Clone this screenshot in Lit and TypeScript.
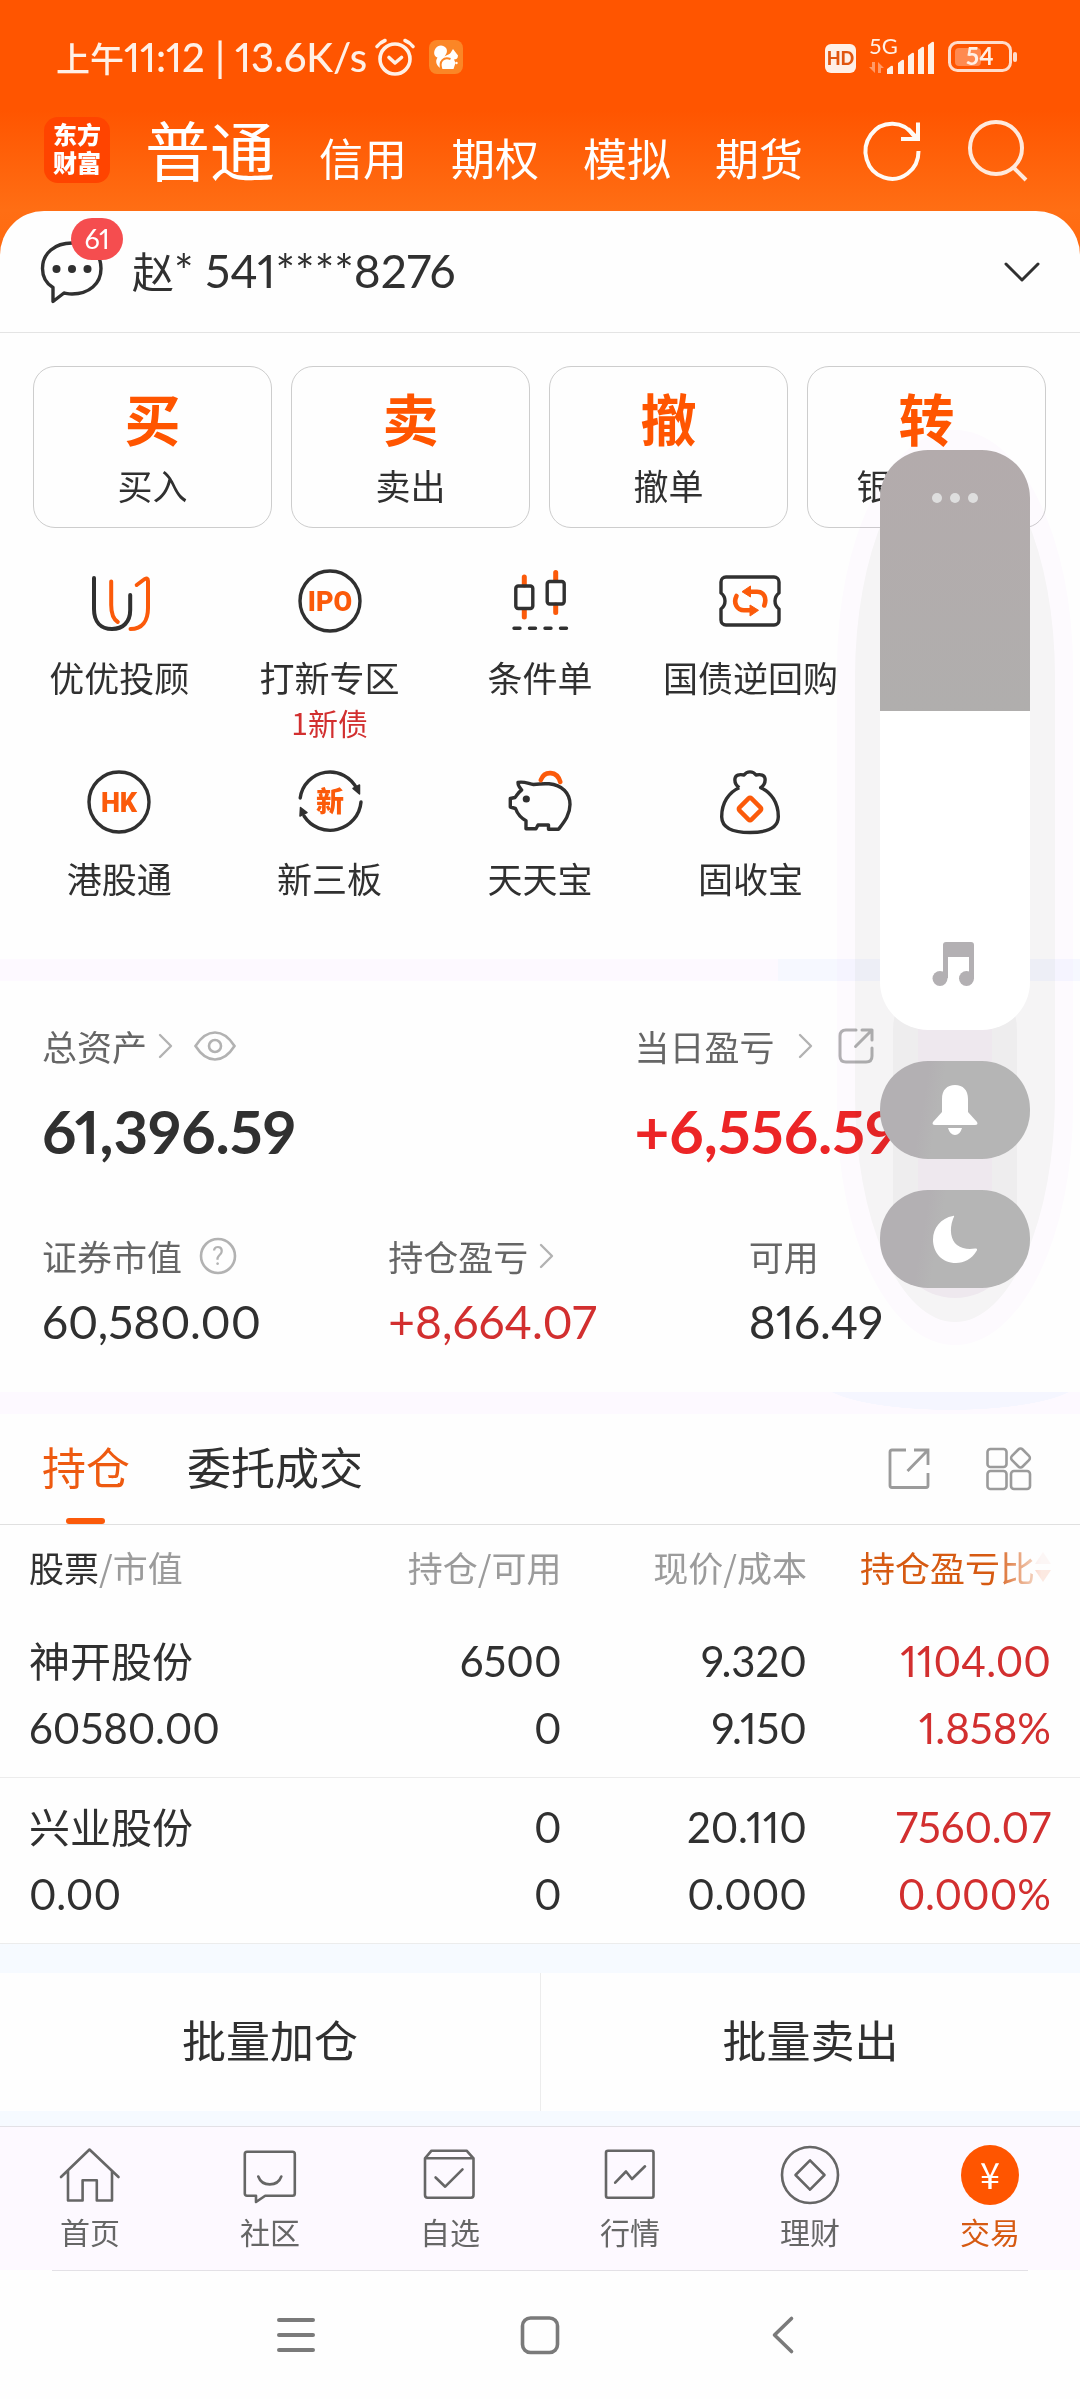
import { LitElement, html, css, svg } from "lit";
import { customElement, state } from "lit/decorators.js";

const shortcuts = [
  {
    label: "优优投顾",
    note: "",
    icon: svg`<g fill="none" stroke-width="4" stroke-linecap="round" stroke-linejoin="round">
      <path stroke="#303030" d="M9 11V42C9 55 16 62 27 62S45.200 55 45.200 43V28"/>
      <path stroke="#fb5a0a" d="M26.200 14.500V38C26.200 47 28 52 32.800 55"/>
      <path stroke="#fb5a0a" d="M51.700 18L59 12.500C61.500 10.500 63 11.500 63 14V41C63 54 57 62 45.500 62"/>
    </g>`,
  },
  {
    label: "打新专区",
    note: "1新债",
    icon: svg`<circle cx="34" cy="34" r="30" fill="none" stroke="#303030" stroke-width="3.400"/>
      <text class="glyph" x="34" y="43.500" text-anchor="middle">IPO</text>`,
  },
  {
    label: "条件单",
    note: "",
    icon: svg`<g fill="none" stroke-linecap="round">
      <path stroke="#fb5a0a" stroke-width="5" d="M18.300 10V18M18.300 43V50M49.700 5.500V13M49.700 38V45.500"/>
      <g stroke="#303030" stroke-width="3.400">
        <rect x="9.800" y="19" width="17" height="22.500" rx="2.500"/>
        <rect x="41.200" y="14.500" width="17" height="22.500" rx="2.500"/>
        <path d="M8 61.300H14M23.500 61.300H29.500M39 61.300H45M54.500 61.300H60.500"/>
      </g>
    </g>`,
  },
  {
    label: "国债逆回购",
    note: "",
    icon: svg`<path fill="none" stroke="#303030" stroke-width="3.400" stroke-linejoin="round"
        d="M10 10H58A5 5 0 0 1 63 15V26A10 10 0 0 0 63 42V53A5 5 0 0 1 58 58H10A5 5 0 0 1 5 53V42A10 10 0 0 0 5 26V15A5 5 0 0 1 10 10Z"/>
      <g fill="none" stroke="#fb5a0a" stroke-width="4.600" stroke-linecap="round">
        <path d="M34 24.700H41C48 24.700 51 31 48.300 38.500"/>
        <path d="M20.500 29C17 36 21 43.300 28 43.300H35"/>
      </g>
      <path fill="#fb5a0a" stroke="#fb5a0a" stroke-width="1" stroke-linejoin="round" d="M26 24.700L34.500 19V30ZM42.500 43.300L34 38V49Z"/>`,
  },
  {
    label: "港股通",
    note: "",
    icon: svg`<circle cx="34" cy="34" r="30" fill="none" stroke="#303030" stroke-width="3.400"/>
      <text class="glyph" x="34" y="43.500" text-anchor="middle">HK</text>`,
  },
  {
    label: "新三板",
    note: "",
    icon: svg`<g fill="none" stroke="#303030" stroke-width="3.400" stroke-linecap="round">
        <path d="M4.200 30A30 30 0 0 1 61 21"/>
        <path d="M65 34A31 31 0 0 1 8 48"/>
      </g>
      <path fill="#303030" stroke="#303030" stroke-width="1.500" stroke-linejoin="round" d="M63.500 26L57 20.500L63.500 17ZM4.500 39.500L4 48L11 44.500Z"/>
      <text class="glyph han" x="34" y="44" text-anchor="middle">新</text>`,
  },
  {
    label: "天天宝",
    note: "",
    icon: svg`<path fill="none" stroke="#303030" stroke-width="3.400" stroke-linejoin="round"
        d="M12 14.500C17 13 22 15.500 27.500 16.500C33 15.800 38 15.500 43 15.800C56 17 64 25 64 36.500C64 47 58 54 52.500 61.300H42.500V57H32L30 60.700H20V52.700C15 50 11.500 46 9.500 40.500L4.300 39V30.500L9 29.500C11 27 12.500 24 15.700 22C13.500 19.500 12 17.500 12 14.500Z"/>
      <circle cx="20.300" cy="31" r="3.600" fill="#303030"/>
      <path fill="none" stroke="#fb5a0a" stroke-width="4.600" stroke-linecap="round" d="M34.800 12C38.500 2.500 51 2.500 54.300 14"/>`,
  },
  {
    label: "固收宝",
    note: "",
    icon: svg`<path fill="none" stroke="#303030" stroke-width="3.400" stroke-linejoin="round"
        d="M23.300 19.700C20 17.500 18.500 14 19 10.500C19.600 7 23 6 28 7C31 2.800 37 2.800 40 7C45 6 48.400 7 49 10.500C49.500 14 48 17.500 44.700 19.700C55 24 62.500 35 62.300 49C62 60 52 64.500 34 64.500S6 60 5.700 49C5.500 35 13 24 23.300 19.700"/>
      <rect x="25.500" y="32.500" width="17" height="17" rx="2" fill="none" stroke="#fb5a0a" stroke-width="4.400" transform="rotate(45 34 41)"/>`,
  },
];

const trades = [
  { mark: "买", label: "买入" },
  { mark: "卖", label: "卖出" },
  { mark: "撤", label: "撤单" },
  { mark: "转", label: "银证转账" },
];

const holdings = [
  { name: "神开股份", value: "60580.00", held: "6500", free: "0", price: "9.320", cost: "9.150", gain: "1104.00", rate: "1.858%" },
  { name: "兴业股份", value: "0.00", held: "0", free: "0", price: "20.110", cost: "0.000", gain: "7560.07", rate: "0.000%" },
];

const tabs = [
  { label: "首页", icon: svg`<path d="M1 32L29.500 4.500L58.500 32M8 26V55.500H22.600V35.300H36.800V55.500H52V26"/>` },
  { label: "社区", icon: svg`<path d="M7 6.700H52.500Q54.800 6.700 54.800 9V48.500Q54.800 50.700 52.500 50.700H25.200L16 57V50.700H7Q4.800 50.700 4.800 48.500V9Q4.800 6.700 7 6.700ZM18.300 31.500C22 42 37.500 42 41.300 31.500"/>` },
  { label: "自选", icon: svg`<path d="M5 13.300L11.500 5.700H46.600L53.500 13.300V50Q53.500 52.700 51 52.700H7.500Q5 52.700 5 50ZH53.500M15.600 32.500L25.200 41.700L42.500 24.300"/>` },
  { label: "行情", icon: svg`<rect x="6" y="5.700" width="47.500" height="47" rx="2"/><path d="M15.200 37.700L26 26.500L32 34L45 21.300"/>` },
  { label: "理财", icon: svg`<circle cx="30" cy="30" r="28"/><path d="M30 15.300L44.500 30L30 44.700L15.500 30Z"/>` },
];

@customElement("app-root")
export class AppRoot extends LitElement {
  @state() private volume = 55;

  static styles = css`
    :host {
      display: block;
      position: relative;
      overflow: hidden;
      background: #fefefe;
      color: #303030;
      font-family: "Noto Sans CJK SC", sans-serif;
      font-size: 35px;
      line-height: 50px;
    }
    * { box-sizing: border-box; }
    button, a, input {
      font: inherit;
      color: inherit;
      background: none;
      border: 0;
      margin: 0;
      padding: 0;
      text-decoration: none;
    }
    button { cursor: pointer; }
    svg { display: block; flex: none; overflow: visible; }
    .num { font-family: Lato, "Noto Sans CJK SC", sans-serif; font-variant-numeric: lining-nums proportional-nums; }

    .top {
      background: linear-gradient(#ff5500 0 110px, #ff6e14 210px, #ff6a10);
      color: #fff;
      padding-bottom: 44px;
    }
    .status {
      display: flex;
      align-items: center;
      height: 98px;
      padding: 16px 62px 0 56px;
      color: #fff0e6;
    }
    .clock { font-size: 34px; font-weight: 500; }
    .clock .num { font-size: 40px; }
    .alarm { margin-left: 8px; }
    .squirrel { margin-left: 14px; }
    .signals { display: flex; align-items: center; margin-left: auto; gap: 14px; }
    .status text { font-family: Lato, sans-serif; }
    .modes {
      display: flex;
      align-items: center;
      height: 113px;
      padding: 0 52px 10px 44px;
    }
    .brand {
      width: 66px;
      height: 66px;
      padding: 3px 9px;
      border-radius: 14px;
      background: #ff4400;
      font-size: 24px;
      font-weight: 900;
      line-height: 28px;
      word-break: break-all;
    }
    .names { display: flex; align-items: baseline; gap: 44px; margin: 0 0 3px 35px; font-size: 44px; white-space: nowrap; }
    .names .on { font-size: 65px; line-height: 80px; }
    .tools { display: flex; align-items: center; gap: 46px; margin-left: auto; }

    .sheet { margin-top: -44px; border-radius: 44px 44px 0 0; background: #fefefe; }
    .account {
      display: flex;
      align-items: center;
      width: 100%;
      height: 122px;
      padding: 0 40px;
      border-bottom: 1px solid #e4e4e4;
      text-align: left;
    }
    .chat { position: relative; margin-right: 28px; }
    .badge {
      position: absolute;
      left: 31px;
      top: -23px;
      width: 52px;
      height: 42px;
      border-radius: 21px;
      background: #f54d4f;
      color: #fff;
      font-size: 27px;
      line-height: 42px;
      text-align: center;
    }
    .owner { font-size: 42px; line-height: 60px; white-space: pre; padding-bottom: 2px; }
    .owner .num { font-size: 46px; }
    .account .down { margin-left: auto; }

    .trades { display: grid; grid-template-columns: repeat(4, 1fr); gap: 19px; padding: 33px 34px 0 33px; }
    .trade {
      display: flex;
      flex-direction: column;
      align-items: center;
      padding: 17px 0 9px;
      border: 1px solid #cdcdcd;
      border-radius: 22px;
      line-height: 66px;
    }
    .trade b { height: 68px; font-size: 56px; color: #ff5500; }

    .shortcuts {
      display: grid;
      grid-template-columns: repeat(5, 1fr);
      row-gap: 25px;
      padding: 39px 14px 57px;
    }
    .shortcut { display: flex; flex-direction: column; align-items: center; line-height: 48px; white-space: nowrap; }
    .shortcut svg { margin-bottom: 18px; }
    .note { color: #d22f2f; font-size: 30px; line-height: 42px; }
    .glyph { fill: #fb5a0a; font: 900 27px Roboto, sans-serif; }
    .han { font: 900 28px "Noto Sans CJK SC", sans-serif; }

    .band { height: 22px; background: #fdf9ff; }
    .tinted { background: linear-gradient(90deg, #fdf9ff 72%, #f6f8ff 72%); }
    .pooled { background: radial-gradient(ellipse 130px 30px at 88% -12px, #f5f6ff 99%, #fdf9ff); }

    .assets { padding: 40px 0 40px 42px; color: #666; }
    .totals, .details { display: grid; }
    .totals { grid-template-columns: 592fr 445fr; row-gap: 25px; }
    .details { grid-template-columns: 346fr 360fr 331fr; row-gap: 11px; margin-top: 65px; }
    .label { display: flex; align-items: center; gap: 11px; }
    .label .help { margin-left: 6px; }
    .label .eye { margin-left: 10px; }
    .label .share { margin-left: 14px; }
    .label .apart { margin-left: 12px; }
    .total { color: #303030; font-size: 60px; font-weight: 700; line-height: 70px; }
    .detail { color: #303030; font-size: 46px; line-height: 60px; }
    .total.up { color: #ec2526; }
    .up { color: #d22f2f; }
    .help text { font: 25px Roboto, sans-serif; fill: #b2b2b2; }

    .views {
      display: flex;
      align-items: center;
      height: 111px;
      padding: 0 48px 0 42px;
      border-bottom: 1px solid #e0e0e0;
      font-size: 44px;
    }
    .view { position: relative; height: 110px; padding-bottom: 7px; margin-right: 57px; }
    .view.on { color: #ee5a10; }
    .view.on::after {
      content: "";
      position: absolute;
      left: 50%;
      bottom: 0;
      width: 39px;
      height: 6px;
      margin-left: -20px;
      border-radius: 3px;
      background: #fb5a0a;
    }
    .views .first { margin-left: auto; margin-right: 56px; }

    .holdings { width: 100%; border-collapse: collapse; table-layout: fixed; }
    .holdings th { height: 87px; padding: 0 0 4px; font-weight: 400; color: #9b9b9b; text-align: right; white-space: nowrap; }
    .holdings th:first-child, .holdings td:first-child { padding-left: 29px; text-align: left; }
    .holdings th:first-child { width: 29%; }
    .holdings th:nth-child(2), .holdings th:nth-child(3) { width: 23%; }
    .holdings th:nth-child(3), .holdings td:nth-child(3) { padding-right: 3px; }
    .holdings th:last-child, .holdings td:last-child { padding-right: 29px; }
    .holdings .key { color: #303030; }
    .sort {
      display: flex;
      align-items: center;
      justify-content: flex-end;
      width: 100%;
      color: #d65a12;
      -webkit-mask-image: linear-gradient(90deg, #000 76%, rgba(0, 0, 0, 0.15) 96%);
      mask-image: linear-gradient(90deg, #000 76%, rgba(0, 0, 0, 0.15) 96%);
    }
    .holdings td {
      padding: 16px 0 15px;
      border-bottom: 1px solid #ececec;
      font-size: 42px;
      line-height: 67px;
      text-align: right;
    }
    .holdings .stock { display: block; height: 67px; font-size: 41px; }
    .line { display: block; }

    .batch { display: grid; grid-template-columns: 1fr 1fr; padding: 29px 0 15px; background: #f6faff; font-size: 44px; }
    .batch button { height: 138px; padding-bottom: 7px; background: #fefefe; }
    .batch button + button { border-left: 1px solid #ececec; }

    .tabbar {
      display: grid;
      grid-template-columns: repeat(6, 1fr);
      border-top: 1px solid #e3e1e6;
      background: #fdf9ff;
      color: #666;
      font-size: 30px;
      line-height: 40px;
    }
    .tab { display: flex; flex-direction: column; align-items: center; gap: 6px; padding: 18px 0 19px; }
    .tab svg { fill: none; stroke: #666; stroke-width: 2.6; stroke-linecap: round; stroke-linejoin: round; }
    .tab.on { color: #d65a12; }
    .coin {
      width: 58px;
      height: 60px;
      border-radius: 50%;
      background: #ff5500;
      color: #fff;
      font-size: 36px;
      line-height: 56px;
      text-align: center;
    }
    .system {
      display: flex;
      justify-content: center;
      gap: 184px;
      margin: 0 52px;
      padding: 34px 0;
      border-top: 1px solid #e3e1e6;
    }

    .volume { position: absolute; top: 450px; right: 50px; width: 150px; }
    .halo { position: absolute; border-radius: 50% / 26%; mix-blend-mode: multiply; }
    .far { inset: -20px -43px -57px; background: #fefbff; }
    .near { inset: 0 -25px -34px; background: #f7f9f6; }
    .core {
      left: 13px;
      right: 13px;
      bottom: -10px;
      height: 330px;
      border-radius: 62px;
      background: linear-gradient(90deg, #f8f8f8 20%, #f8f3f8 20% 80%, #f8f8f8 80%);
    }
    .panel { position: relative; display: flex; flex-direction: column; gap: 31px; }
    .level { position: relative; height: 580px; border-radius: 48px; overflow: hidden; }
    .range {
      display: block;
      width: 100%;
      height: 100%;
      appearance: none;
      -webkit-appearance: none;
      writing-mode: vertical-lr;
      direction: rtl;
      background: linear-gradient(#b3abac, #b0aead) top / 100% calc(100% - var(--level)) no-repeat #fff;
    }
    .range::-webkit-slider-thumb { -webkit-appearance: none; width: 1px; height: 1px; opacity: 0; }
    .more { position: absolute; top: 40px; left: 50%; margin-left: -25px; }
    .music { position: absolute; bottom: 42px; left: 52px; pointer-events: none; }
    .pill {
      display: grid;
      place-content: center;
      height: 98px;
      border-radius: 48px;
      background: linear-gradient(100deg, #b3b0b3 30%, #b5b5b5 40%);
    }
  `;

  private chevron() {
    return svg`<path d="M2 2L13 13L2 24" fill="none" stroke="#b2b2b2" stroke-width="2.400" stroke-linecap="round" stroke-linejoin="round"/>`;
  }

  private renderTop() {
    return html`<header class="top">
      <div class="status">
        <span class="clock">上午<span class="num">11:12 | 13.6K/s</span></span>
        <svg class="alarm" width="40" height="38" viewBox="0 0 40 38" fill="none" stroke="#fff0e6" stroke-width="3.600" stroke-linecap="round" stroke-linejoin="round">
          <circle cx="20" cy="21" r="15"/><path d="M14 19.500L20 25L26.500 19.500"/><path d="M2 8.500Q5 4.500 10 2.500M38 8.500Q35 4.500 30 2.500"/>
        </svg>
        <svg class="squirrel" width="34" height="34" viewBox="0 0 34 34">
          <rect width="34" height="34" rx="8" fill="#fb8626"/>
          <path fill="#fff" d="M13 29C7 26 6 21 8.500 17.500C4.500 16.500 4.500 11.500 6.500 8.500C9 4.500 14.500 4.500 17 8C19 11 17.500 14 15.500 16.500C17.500 14.500 20.500 15 21.500 13L24 9L29 15.500C29 18.500 27 19.500 25 19.500L26.500 23L24.500 29Z"/>
          <path fill="none" stroke="#fb8626" stroke-width="2" d="M12.500 29.500C9.500 21 15 16.500 21.500 19"/><circle cx="27.500" cy="23" r="1.200" fill="#fff"/>
        </svg>
        <span class="signals">
          <svg width="109" height="44" viewBox="0 -4 109 44" fill="#fff0e6">
            <rect x="0" y="5" width="31" height="29" rx="6"/>
            <text x="15.500" y="26" text-anchor="middle" font-size="18" font-weight="900" fill="#e0560f">HD</text>
            <text x="44" y="15" font-size="22">5G</text>
            <g opacity="0.450"><path d="M47 23h3v11l-6-6h3zM53 34h3V29h3l-6-6z"/></g>
            <path d="M62 30l4-3q2-1 2 1v7h-6zM73 24l4-3q2-1 2 1v13h-6zM83 17l4-3q2-1 2 1v20h-6zM93 11l4-3q2-1 2 1v26h-6zM103 6l4-3q2-1 2 1v31h-6z"/>
          </svg>
          <svg width="70" height="32" viewBox="0 0 70 32">
            <rect x="1.500" y="1.500" width="61" height="28" rx="8" fill="none" stroke="#ffdccb" stroke-width="3"/>
            <rect x="7" y="7" width="26" height="18" rx="4" fill="#ff8a50"/>
            <rect x="65" y="11" width="4" height="10" rx="2" fill="#ffdccb"/>
            <text x="31.500" y="24" text-anchor="middle" font-size="24" font-weight="700" fill="#fff0e6">54</text>
          </svg>
        </span>
      </div>
      <nav class="modes">
        <span class="brand">东方财富</span>
        <div class="names">
          <a class="on" href="#normal">普通</a><a href="#credit">信用</a><a href="#options">期权</a><a href="#paper">模拟</a><a href="#futures">期货</a>
        </div>
        <div class="tools">
          <button aria-label="刷新"><svg width="58" height="60" viewBox="0 0 58 60" fill="none" stroke="#fffaf5" stroke-width="4">
            <path d="M54.500 31A26.500 27.500 0 1 1 50 16"/><path d="M54 2.500V19H37M52 17L44 9"/></svg></button>
          <button aria-label="搜索"><svg width="60" height="62" viewBox="0 0 60 62" fill="none" stroke="#ffe9dc" stroke-width="4">
            <circle cx="28" cy="29" r="26"/><path d="M45 48L58 61"/></svg></button>
        </div>
      </nav>
    </header>`;
  }

  private renderAccount() {
    return html`<button class="account">
        <span class="chat">
          <svg width="64" height="62" viewBox="0 0 64 62"><path fill="none" stroke="#303030" stroke-width="3.400" stroke-linejoin="round"
            d="M32 2C49 2 61 12 61 27.500S49 53 32 53C29 53 27 52.500 24 52L13 60.500V46.500C5.500 42 2.500 35 2.500 27.500C2.500 12 15 2 32 2Z"/>
            <circle cx="16.500" cy="28" r="4" fill="#303030"/><circle cx="32" cy="28" r="4" fill="#303030"/><circle cx="47.500" cy="28" r="4" fill="#303030"/></svg>
          <span class="badge num">61</span>
        </span>
        <span class="owner">赵<span class="num">* 541****8276</span></span>
        <svg class="down" width="36" height="20" viewBox="0 0 36 20" fill="none" stroke="#303030" stroke-width="3" stroke-linecap="round" stroke-linejoin="round"><path d="M2 2L18 18L34 2"/></svg>
      </button>
      <section class="trades">
        ${trades.map((t) => html`<button class="trade"><b>${t.mark}</b><span>${t.label}</span></button>`)}
      </section>
      <section class="shortcuts">
        ${shortcuts.slice(0, 4).map((s) => this.renderShortcut(s))}<span></span>
        ${shortcuts.slice(4).map((s) => this.renderShortcut(s))}
      </section>`;
  }

  private renderShortcut(s: (typeof shortcuts)[number]) {
    return html`<a class="shortcut" href="#shortcut">
      <svg width="68" height="68" viewBox="0 0 68 68">${s.icon}</svg>
      <span>${s.label}</span>${s.note ? html`<span class="note">${s.note}</span>` : ""}
    </a>`;
  }

  private renderAssets() {
    return html`<section class="assets">
      <div class="totals">
        <div class="label">总资产
          <svg width="15" height="26" viewBox="0 0 15 26">${this.chevron()}</svg>
          <svg class="eye" width="42" height="30" viewBox="0 0 42 30" fill="none" stroke="#b2b2b2" stroke-width="2.600"><path d="M1.500 15Q10 1.500 21 1.500T40.500 15Q32 28.500 21 28.500T1.500 15Z"/><circle cx="21" cy="15" r="6"/></svg>
        </div>
        <div class="label">当日盈亏
          <svg class="apart" width="15" height="26" viewBox="0 0 15 26">${this.chevron()}</svg>
          <svg class="share" width="36" height="36" viewBox="0 0 36 36" fill="none" stroke="#b2b2b2" stroke-width="3" stroke-linecap="round" stroke-linejoin="round"><path d="M18 2H8Q2 2 2 8V28Q2 34 8 34H28Q34 34 34 28V20M24 2H34V12M34 2L17.500 18.500"/></svg>
        </div>
        <div class="total num">61,396.59</div>
        <div class="total num up">+6,556.59</div>
      </div>
      <div class="details">
        <div class="label">证券市值
          <svg class="help" width="38" height="38" viewBox="0 0 38 38"><circle cx="19" cy="19" r="17" fill="none" stroke="#b2b2b2" stroke-width="2.600"/><text x="19" y="28" text-anchor="middle">?</text></svg>
        </div>
        <div class="label">持仓盈亏 <svg width="15" height="26" viewBox="0 0 15 26">${this.chevron()}</svg></div>
        <div class="label">可用</div>
        <div class="detail num">60,580.00</div>
        <div class="detail num up">+8,664.07</div>
        <div class="detail num">816.49</div>
      </div>
    </section>`;
  }

  private renderHoldings() {
    return html`<nav class="views">
        <button class="view on">持仓</button><button class="view">委托成交</button>
        <button class="first" aria-label="分享"><svg width="42" height="42" viewBox="0 0 42 42" fill="none" stroke="#9b9b9b" stroke-width="2.800"><path d="M18 2H4Q2 2 2 4V37.500Q2 39.500 4 39.500H38Q40 39.500 40 37.500V25M26 2H40V17M40 2L19.500 23"/></svg></button>
        <button aria-label="更多"><svg width="46" height="44" viewBox="0 0 46 44" fill="none" stroke="#9b9b9b" stroke-width="2.600"><rect x="1.500" y="2" width="19" height="18" rx="3"/><rect x="1.500" y="24" width="19" height="18" rx="3"/><rect x="25" y="24" width="19" height="18" rx="3"/><rect x="27" y="3.500" width="15" height="15" rx="3" transform="rotate(45 34.500 11)"/></svg></button>
      </nav>
      <table class="holdings">
        <thead><tr>
          <th><span class="key">股票</span>/市值</th><th>持仓/可用</th><th>现价/成本</th>
          <th><button class="sort">持仓盈亏比<svg width="16" height="32" viewBox="0 0 16 32"><path fill="#f3c9c0" d="M8 1L16 13H0Z"/><path fill="#f0703a" d="M8 31L16 19H0Z"/></svg></button></th>
        </tr></thead>
        <tbody>
          ${holdings.map((h) => html`<tr>
            <td class="num"><span class="stock">${h.name}</span><span class="line">${h.value}</span></td>
            <td class="num"><span class="line">${h.held}</span><span class="line">${h.free}</span></td>
            <td class="num"><span class="line">${h.price}</span><span class="line">${h.cost}</span></td>
            <td class="num up"><span class="line">${h.gain}</span><span class="line">${h.rate}</span></td>
          </tr>`)}
        </tbody>
      </table>
      <div class="batch"><button>批量加仓</button><button>批量卖出</button></div>`;
  }

  private renderBottom() {
    return html`<nav class="tabbar">
        ${tabs.map((t) => html`<a class="tab" href="#tab"><svg width="60" height="60" viewBox="0 0 60 60">${t.icon}</svg>${t.label}</a>`)}
        <a class="tab on" href="#trade"><span class="coin">¥</span>交易</a>
      </nav>
      <nav class="system">
        <button aria-label="菜单"><svg width="60" height="60" viewBox="0 0 60 60" stroke="#7a7a7a" stroke-width="4" stroke-linecap="round"><path d="M13 15H47M13 30H47M13 45H47"/></svg></button>
        <button aria-label="主屏幕"><svg width="60" height="60" viewBox="0 0 60 60"><rect x="12.500" y="13" width="35" height="34.500" rx="8" fill="none" stroke="#7a7a7a" stroke-width="3.600"/></svg></button>
        <button aria-label="返回"><svg width="60" height="60" viewBox="0 0 60 60" fill="none" stroke="#7a7a7a" stroke-width="3.600" stroke-linecap="round" stroke-linejoin="round"><path d="M37.500 13.500L20.500 30L37.500 46.500"/></svg></button>
      </nav>`;
  }

  private renderVolume() {
    return html`<aside class="volume">
      <div class="halo far"></div><div class="halo near"></div><div class="halo core"></div>
      <div class="panel">
        <div class="level">
          <input class="range" type="range" min="0" max="100" aria-label="媒体音量" .value=${String(this.volume)}
            style="--level:${this.volume}%" @input=${(e: Event) => (this.volume = Number((e.target as HTMLInputElement).value))}>
          <button class="more" aria-label="更多音量"><svg width="50" height="16" viewBox="0 0 50 16" fill="#dedede"><circle cx="7" cy="8" r="5"/><circle cx="25" cy="8" r="5"/><circle cx="43" cy="8" r="5"/></svg></button>
          <svg class="music" width="44" height="46" viewBox="0 0 44 46" fill="#b3b0b3"><path d="M11 3Q11 0 14 0H39Q42 0 42 3V36H37V15H16V36H11Z"/><circle cx="8" cy="36.500" r="7.500"/><circle cx="34.500" cy="36.500" r="7.500"/></svg>
        </div>
        <button class="pill" aria-label="静音"><svg width="46" height="50" viewBox="0 0 46 50" fill="#fff"><path d="M10 14C10 5 15 0 23 0S36 5 36 14V27L45 37Q46.500 40 43 40H3Q-.500 40 1 37L10 27ZM16 43H30Q28 50 23 50T16 43Z"/></svg></button>
        <button class="pill" aria-label="勿扰"><svg width="46" height="48" viewBox="0 0 46 48" fill="#fff"><path d="M21 1C23 0 22 2 21 4C17 15 19 25 25 30C30 34 37 34.500 43 33.500C45.500 33 45.500 34.500 44.500 36C40 44 32 48 24 48C10 48 1 37.500 1 24.500C1 13 9 3 21 1Z"/></svg></button>
      </div>
    </aside>`;
  }

  render() {
    return html`${this.renderTop()}
      <main class="sheet">
        ${this.renderAccount()}
        <div class="band tinted"></div>
        ${this.renderAssets()}
        <div class="band pooled"></div>
        ${this.renderHoldings()}
      </main>
      ${this.renderBottom()} ${this.renderVolume()}`;
  }
}
